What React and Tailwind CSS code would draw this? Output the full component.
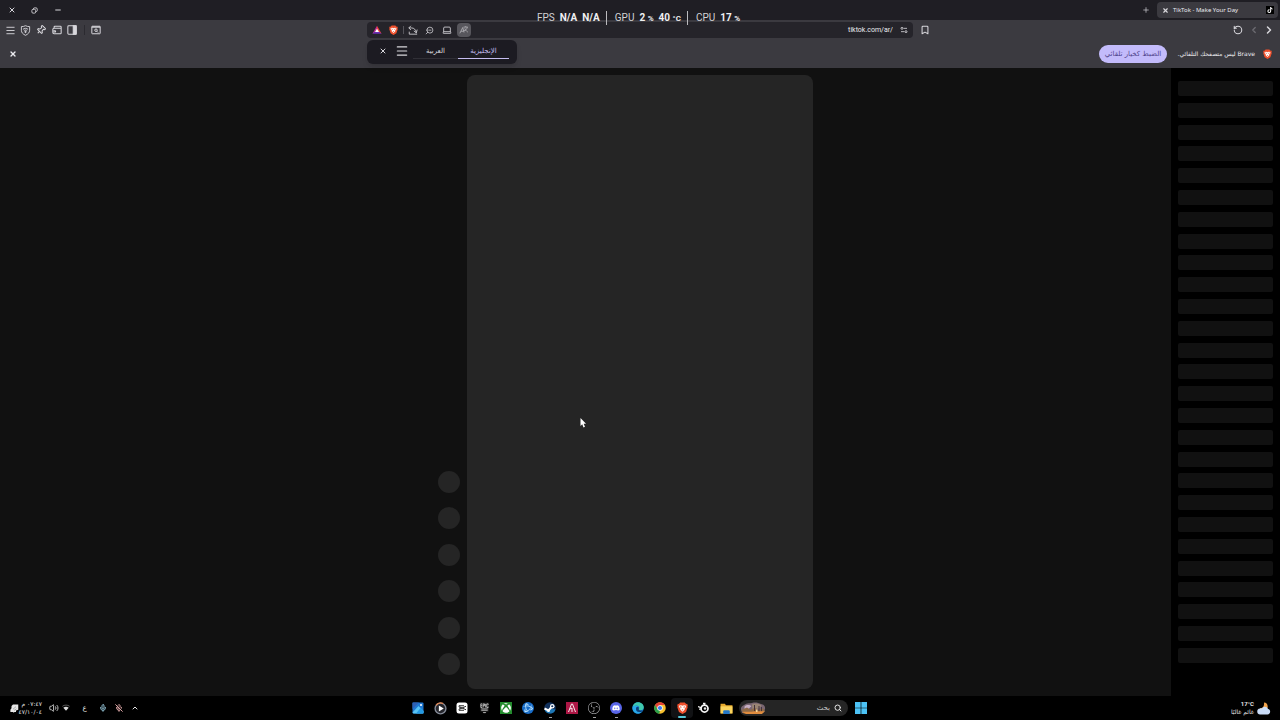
import React from "react";
import {
  X, Minus, Plus, Menu, Pin, PanelRight, Bookmark, RotateCcw, ChevronLeft, ChevronRight,
  ChevronUp, Mic, MicOff, Volume2, Search, Laptop, ZoomOut,
} from "lucide-react";
import { FaDiscord, FaXbox, FaTiktok } from "react-icons/fa";
import { SiObsstudio, SiBattledotnet } from "react-icons/si";

const arabic = "font-['DejaVu_Sans','Noto_Sans',sans-serif]";

function BraveLogo({ className }) {
  return (
    <svg viewBox="0 0 24 26" className={className} aria-hidden="true">
      <path d="M7 1h10l3 3 2-.3 1.500 3.300-.8 2.200.6 2-3.600 10.500L12 26l-7.700-4.300L.7 11.200l.6-2L.5 7 2 3.700 4 4z" fill="#f0502c" />
      <path d="M5 7.500 9 7l3 1 3-1 4 .5 1 2.500-3.500 4.500.5 2-5 4.500-5-4.500.5-2L4 10z" fill="#fff" />
      <path d="m5.500 9 4.500 1.300-1 3zM18.500 9 14 10.300l1 3zM10 17l2-1.500 2 1.500-2 1.500z" fill="#f0502c" />
    </svg>
  );
}

function Bat() {
  return (
    <svg viewBox="0 0 24 24" className="size-2.5" aria-hidden="true">
      <path d="M12 2 12 10 6 18 1 21z" fill="#c02a96" />
      <path d="M12 2 23 21 17 18 12 10z" fill="#f0403a" />
      <path d="M1 21h22l-5-4H6z" fill="#6a2fb4" />
      <path d="m12 9 5 8H7z" fill="#fff" />
    </svg>
  );
}

function Restore() {
  return (
    <svg viewBox="0 0 12 12" className="size-[7px]" fill="none" stroke="currentColor" strokeWidth="1.500" aria-hidden="true">
      <rect x="1.500" y="4" width="6.500" height="6.500" rx="2" />
      <path d="M4 3.500C4 2 5 1.500 6 1.500h2.500a2.200 2.200 0 0 1 2.200 2.200V6c0 1-.7 1.800-1.700 2" />
    </svg>
  );
}

function ShieldEye() {
  return (
    <svg viewBox="0 0 24 24" className="size-[11px]" fill="none" stroke="currentColor" strokeWidth="2" aria-hidden="true">
      <path d="M12 1.500c3 1.700 6 2 9 2v8c0 5-3.500 8.500-9 11-5.500-2.500-9-6-9-11v-8c3 0 6-.3 9-2z" />
      <path d="M6.500 9.500c3-3 8-3 11 0M8.500 12.500c2-2 5-2 7 0" />
      <circle cx="12" cy="15" r="1.500" fill="currentColor" />
    </svg>
  );
}

function Wallet() {
  return (
    <svg viewBox="0 0 24 24" className="size-[10px]" fill="none" stroke="currentColor" strokeWidth="2.500" aria-hidden="true">
      <path d="M5 8V5a2 2 0 0 1 2-2h13a2 2 0 0 1 2 2v14a2 2 0 0 1-2 2H5a3 3 0 0 1-3-3v-7a3 3 0 0 1 3-3h17" />
      <path d="M3 14h5a2 2 0 0 1 0 3H3" />
    </svg>
  );
}

function SidePanel() {
  return (
    <svg viewBox="0 0 24 24" className="size-[10px]" fill="none" stroke="currentColor" strokeWidth="2.500" aria-hidden="true">
      <rect x="2" y="2" width="20" height="20" rx="2" />
      <path d="M15 2h7v20h-7z" fill="currentColor" />
    </svg>
  );
}

function TabSearch() {
  return (
    <svg viewBox="0 0 24 24" className="size-[10px]" fill="none" stroke="currentColor" strokeWidth="2.400" aria-hidden="true">
      <rect x="2" y="3" width="20" height="18" rx="1" />
      <path d="M2 5h20" strokeWidth="3" />
      <circle cx="12" cy="12.500" r="3" />
      <path d="m14 15 3 3" />
    </svg>
  );
}

function Share() {
  return (
    <svg viewBox="0 0 24 24" className="size-[10px]" fill="none" stroke="currentColor" strokeWidth="2" aria-hidden="true">
      <path d="M7 2 2 7l5 5M2 7h6c7 0 10 4 12 11M14 14l6 5 2-8M3 16v6h19" />
    </svg>
  );
}

function Tune() {
  return (
    <svg viewBox="0 0 24 24" className="size-2" fill="none" stroke="currentColor" strokeWidth="2.500" aria-hidden="true">
      <circle cx="6" cy="7" r="3" />
      <path d="M11 7h10M3 17h10" />
      <circle cx="18" cy="17" r="3" />
    </svg>
  );
}

function Translate() {
  return (
    <svg viewBox="0 0 24 24" className="size-2.5" fill="none" stroke="currentColor" strokeWidth="2" aria-hidden="true">
      <path d="m2 20 7-14 3 12M5 15h6M11 5h10M16 3v2M20 5c-1 5-4 8-8 9M14 8c1 4 4 7 7 9" />
    </svg>
  );
}

function Photos() {
  return (
    <svg viewBox="0 0 24 24" className="size-3" aria-hidden="true">
      <rect x="1" y="1" width="22" height="22" rx="2" fill="#1f78d1" />
      <path d="M1 1h13L1 14z" fill="#2f5fb4" />
      <path d="M1 21 13 8l10 10v3a2 2 0 0 1-2 2H3z" fill="#58c4f5" />
      <path d="M8 23 17 12l6 6v5z" fill="#2499e3" />
      <circle cx="18" cy="6" r="2" fill="#fff" />
    </svg>
  );
}

function MediaPlayer() {
  return (
    <svg viewBox="0 0 24 24" className="size-[13px]" aria-hidden="true">
      <circle cx="12" cy="12" r="10" fill="#25262c" stroke="#858b98" strokeWidth="2.500" />
      <path d="M4 6a10 10 0 0 1 13-3" fill="none" stroke="#dc8352" strokeWidth="2.500" />
      <path d="M9 6.500v11l9-5.500z" fill="#fff" />
    </svg>
  );
}

function CapCut() {
  return (
    <svg viewBox="0 0 24 24" className="size-3" aria-hidden="true">
      <rect x="1" y="1" width="22" height="22" rx="5" fill="#fff" />
      <path d="M20 8.500 8 14M20 15.500 8 10M16 7.500H6v2l3 2.500-3 2.500v2h10" fill="none" stroke="#111" strokeWidth="1.800" />
    </svg>
  );
}

function EpicGames() {
  return (
    <svg viewBox="0 0 24 26" className="h-3 w-[11px]" fill="none" stroke="#d0d0d0" strokeWidth="1.800" aria-hidden="true">
      <path d="M2 1h20v19l-10 5-10-5z" fill="#161616" stroke="none" />
      <path d="M7 4H4v8h3M4 8h3M9 12V4h3v4H9M14.500 4v8M20 6V4h-3v8h3v-2M5 15h14M5 18h14M9 23h6" />
    </svg>
  );
}

function Steam() {
  return (
    <svg viewBox="0 0 24 24" className="size-3" aria-hidden="true">
      <circle cx="12" cy="12" r="11.500" fill="#12315c" />
      <path d="M1 15a11.500 11.500 0 0 0 22 0l-9-1z" fill="#1d77b5" />
      <path d="m1 13 8 4 7-8" fill="none" stroke="#fff" strokeWidth="4" />
      <circle cx="16.500" cy="8.500" r="4.500" fill="#fff" />
      <circle cx="16.500" cy="8.500" r="2.200" fill="#12315c" />
      <circle cx="9" cy="17" r="3" fill="#fff" />
    </svg>
  );
}

function RedTile() {
  return (
    <svg viewBox="0 0 24 24" className="size-3" aria-hidden="true">
      <rect width="24" height="24" fill="#ad1745" />
      <path d="m5 20 6-16h2l6 16M8 14l4-2v8" fill="none" stroke="#fff" strokeWidth="1.800" />
    </svg>
  );
}

function Edge() {
  return (
    <svg viewBox="0 0 24 24" className="size-3" aria-hidden="true">
      <circle cx="12" cy="12" r="11.500" fill="#1683d8" />
      <path d="M1 11C2 4 7 .5 12 .5c7 0 11.500 5 11.500 10 0 4-3 6-6.500 6-2 0-3.500-1-3.500-2 0-.8 1-1.300 1-3C14.500 9 12 7 9 7c-4 0-7 2-8 4z" fill="#40c8ac" />
      <path d="M1 11c2-4 9-5 12-1-3-1-5 1-5 4 0 5 5 8 11 6-5 6-18 4-18-9z" fill="#28a8e8" />
      <path d="M13 10c-3-1-5 1-5 4 0 5 5 8 12 5l2-3c-3 2-10 1-8.500-2z" fill="#0d3f77" />
    </svg>
  );
}

function Chrome() {
  return (
    <svg viewBox="0 0 24 24" className="size-3" aria-hidden="true">
      <circle cx="12" cy="12" r="11.500" fill="#f6c02d" />
      <path d="M2 6.200A11.500 11.500 0 0 1 22 6.200H12L7.500 15z" fill="#e44235" />
      <path d="M2 6.200 7.200 15 12 17.500l-1.500 6A11.500 11.500 0 0 1 2 6.200z" fill="#2ba24c" />
      <circle cx="12" cy="12" r="5.500" fill="#fff" />
      <circle cx="12" cy="12" r="4.200" fill="#3b7ded" />
    </svg>
  );
}

function SteelSeries() {
  return (
    <svg viewBox="0 0 24 24" className="size-3" fill="none" stroke="#f4f4f4" aria-hidden="true">
      <circle cx="13" cy="13" r="7" strokeWidth="3.500" />
      <circle cx="14" cy="13" r="2" fill="#f4f4f4" />
      <path d="M10 2.500h5M12.500 2v5M0 9l8 3M2 14h5" strokeWidth="2.500" />
    </svg>
  );
}

function Folder() {
  return (
    <svg viewBox="0 0 24 24" className="size-[13px]" aria-hidden="true">
      <path d="M1 3h8l2 3h12v15H1z" fill="#e6a92c" />
      <path d="M1 8h22v13H1z" fill="#fad45e" />
      <path d="M6 22v-5a2 2 0 0 1 2-2h8a2 2 0 0 1 2 2v5z" fill="#2376c7" />
    </svg>
  );
}

function Windows() {
  return (
    <svg viewBox="0 0 24 24" className="size-3" aria-hidden="true">
      <path d="M0 0h11.300v11.300H0zM12.700 0H24v11.300H12.700zM0 12.700h11.300V24H0zM12.700 12.700H24V24H12.700z" fill="#4cc2f5" />
    </svg>
  );
}

function SearchArt() {
  return (
    <svg viewBox="0 0 52 26" className="h-[13px] w-[26px] shrink-0" aria-hidden="true">
      <path d="M2 15C1 9 7 7 10 5c5-4 10-2 14-3 7-2 13 0 18 2 6 1 9 5 8 10l-3 8H4z" fill="#796672" />
      <path d="M9 9c5-5 11-3 14-1l-5 5-9 3z" fill="#c6aec3" />
      <path d="M24 5c7-4 15-1 19 2l-5 6-13 2z" fill="#998474" />
      <path d="m3 16 11-5 7 5 9-5 5 5 12-3 3 6-6 4H7z" fill="#8e6a48" />
      <path d="M29 6v13M38 8v11M43 10v9" stroke="#44333b" strokeWidth="2" />
      <path d="M4 20c9-2 13 1 22-1s15 1 23-1l-5 6H12z" fill="#e08c3e" />
      <path d="M32 15h3v5h-3z" fill="#f5d69c" />
    </svg>
  );
}

function Weather() {
  return (
    <svg viewBox="0 0 28 26" className="h-[13px] w-[14px]" aria-hidden="true">
      <path d="M14 1a8 8 0 1 1-8 11c5 1 9-3 8-11z" fill="#f0a24a" />
      <path d="M7 25a6 6 0 0 1-1-12c2-1 3 0 4 0 2-5 10-5 12 1 6 1 6 10-1 11z" fill="#c9dcf8" />
    </svg>
  );
}

function IconButton({ label, className = "", children }) {
  return (
    <button type="button" aria-label={label} className={`flex shrink-0 items-center justify-center ${className}`}>
      {children}
    </button>
  );
}

function TabStrip() {
  return (
    <header className="flex h-5 items-center bg-[#1f1e24] pr-0.5 text-[#d8d7dc]">
      <IconButton label="إغلاق" className="w-[23px]"><X className="size-2" strokeWidth={3} /></IconButton>
      <IconButton label="استعادة" className="w-[23px]"><Restore /></IconButton>
      <IconButton label="تصغير" className="w-[23px]"><Minus className="size-2" strokeWidth={3} /></IconButton>
      <div className="flex-1" />
      <IconButton label="علامة تبويب جديدة" className="w-[22px]"><Plus className="size-2" /></IconButton>
      <div className="flex h-4 w-[121px] items-center rounded bg-[#3b3a40] px-1">
        <IconButton label="إغلاق علامة التبويب" className="size-2"><X className="size-[7px]" strokeWidth={4} /></IconButton>
        <span className="ml-1 flex-1 whitespace-nowrap font-['Noto_Sans',sans-serif] text-[6px] leading-[8px] text-[#ececf0]">TikTok - Make Your Day</span>
        <span className="flex size-2 items-center justify-center bg-black"><FaTiktok className="size-1.5 text-white" /></span>
      </div>
    </header>
  );
}

function TranslatePopup() {
  return (
    <div className="absolute top-[18px] left-0 z-10 flex h-6 w-[150px] items-center rounded-md bg-[#1c1b22] pb-0.5 text-[#d8d7dc] shadow-md">
      <IconButton label="إغلاق الترجمة" className="ml-2.5 w-[11px]"><X className="size-2" strokeWidth={3} /></IconButton>
      <IconButton label="خيارات الترجمة" className="ml-[7px] w-3.5"><Menu className="size-3.5" strokeWidth={2} /></IconButton>
      <div role="tablist" className={`ml-1 flex h-4 items-end text-[7px] leading-[10px] ${arabic}`}>
        <button type="button" role="tab" aria-selected="false" dir="rtl" className="h-[13px] w-[45px] border-b border-[#302f36] pb-0.5">العربية</button>
        <button type="button" role="tab" aria-selected="true" dir="rtl" className="h-[13px] w-[51px] border-b border-[#c5bdf0] pb-0.5 text-[#c5bdf0]">الإنجليزية</button>
      </div>
    </div>
  );
}

function Toolbar() {
  return (
    <div className="grid h-5 grid-cols-[1fr_546px_1fr] items-center bg-[#3b3a40] text-[#d8d7dc]">
      <div className="flex items-center pl-[3px]">
        <IconButton label="القائمة" className="w-[15px]"><Menu className="size-[11px]" /></IconButton>
        <IconButton label="VPN" className="w-[15px]"><ShieldEye /></IconButton>
        <IconButton label="الإضافات" className="w-4"><Pin className="size-2.5 rotate-45" strokeWidth={2.500} /></IconButton>
        <IconButton label="المحفظة" className="w-[15px]"><Wallet /></IconButton>
        <IconButton label="الشريط الجانبي" className="w-[15px]"><SidePanel /></IconButton>
        <span className="mx-[5px] h-2.5 w-px bg-[#2b2a30]" />
        <IconButton label="البحث في علامات التبويب" className="w-3"><TabSearch /></IconButton>
      </div>
      <div className="relative flex h-4 items-center rounded bg-[#25242a] px-0.5">
        <IconButton label="مكافآت Brave" className="w-4"><Bat /></IconButton>
        <IconButton label="دروع Brave" className="w-4"><BraveLogo className="h-2.5 w-[9px]" /></IconButton>
        <span className="ml-0.5 h-2 w-px bg-[#55545a]" />
        <IconButton label="مشاركة" className="w-[17px]"><Share /></IconButton>
        <IconButton label="تصغير العرض" className="w-[17px]"><ZoomOut className="size-[9px] -scale-x-100" strokeWidth={2} /></IconButton>
        <IconButton label="تثبيت التطبيق" className="w-[17px]"><Laptop className="size-2.5" /></IconButton>
        <IconButton label="ترجمة" className="ml-0.5 h-3.5 w-3.5 rounded-sm bg-[#57565c] text-[#b4b3b8]"><Translate /></IconButton>
        <input aria-label="العنوان" defaultValue="tiktok.com/ar/" className="min-w-0 flex-1 bg-transparent text-right font-['Roboto',sans-serif] text-[7px] leading-[10px] text-[#ececf0] outline-none" />
        <IconButton label="معلومات الموقع" className="ml-1 w-3.5"><Tune /></IconButton>
        <TranslatePopup />
      </div>
      <div className="flex items-center pr-1 pl-1.5">
        <IconButton label="إشارة مرجعية" className="w-3"><Bookmark className="size-2.5" strokeWidth={2.500} /></IconButton>
        <div className="flex-1" />
        <IconButton label="إعادة التحميل" className="w-4"><RotateCcw className="size-2.5" strokeWidth={2.500} /></IconButton>
        <IconButton label="رجوع" className="w-[15px] text-[#6d6c72]"><ChevronLeft className="size-2.5" strokeWidth={3} /></IconButton>
        <IconButton label="للأمام" className="w-[15px]"><ChevronRight className="size-3" strokeWidth={3} /></IconButton>
      </div>
    </div>
  );
}

function DefaultBrowserBar() {
  return (
    <div className="flex h-7 items-center bg-[#3b3a40] pr-2 pl-[7px] text-[#ececf0]">
      <IconButton label="إغلاق التنبيه" className="w-3"><X className="size-2" strokeWidth={4} /></IconButton>
      <div className="flex-1" />
      <button type="button" dir="rtl" className={`h-[18px] w-[68px] rounded-full bg-[#c3bbfb] text-[7px] leading-[10px] whitespace-nowrap text-[#50458c] ${arabic}`}>الضبط كخيار تلقائي</button>
      <p dir="rtl" className={`ml-1.5 w-[82px] text-[6px] leading-[10px] whitespace-nowrap ${arabic}`}>Brave ليس متصفحك التلقائي.</p>
      <BraveLogo className="ml-2 h-2.5 w-[9px]" />
    </div>
  );
}

function PerformanceOverlay() {
  return (
    <div className="pointer-events-none absolute top-[11px] left-[537px] z-20 flex h-3.5 items-center gap-[5px] font-['Roboto',sans-serif] text-[10px] leading-[14px] whitespace-nowrap text-[#f0f0f2]">
      <span className="text-[#d2d2d5]">FPS</span>
      <b>N/A</b>
      <b>N/A</b>
      <span className="mx-px h-3.5 w-px bg-[#bbbbbe]" />
      <span className="ml-0.5 text-[#d2d2d5]">GPU</span>
      <b>2 <span className="text-[8px]">%</span></b>
      <b>40 <span className="text-[8px]">°C</span></b>
      <span className="mx-px h-3.5 w-px bg-[#bbbbbe]" />
      <span className="ml-0.5 text-[#d2d2d5]">CPU</span>
      <b>17 <span className="text-[8px]">%</span></b>
    </div>
  );
}

function Feed() {
  return (
    <main className="flex flex-1 bg-black">
      <section className="grid flex-1 grid-cols-[1fr_346px_1fr] gap-[7px] bg-[#111111] pt-[7px] pb-[7px] pl-[109px]">
        <div className="flex h-full items-end justify-end pb-3.5">
          <div className="flex h-[204px] flex-col justify-between">
            {Array.from({ length: 6 }, (_, i) => (
              <div key={i} className="size-[22px] rounded-full bg-[#252525]" />
            ))}
          </div>
        </div>
        <div className="rounded-lg bg-[#252525]" />
      </section>
      <aside className="flex w-[109px] flex-col justify-between px-[7px] pt-[13px] pb-[33px]">
        {Array.from({ length: 27 }, (_, i) => (
          <div key={i} className="h-[15px] rounded-xs bg-[#111111]" />
        ))}
      </aside>
    </main>
  );
}

const apps = [
  { name: "Photos", icon: <Photos /> },
  { name: "Media Player", icon: <MediaPlayer /> },
  { name: "CapCut", icon: <CapCut /> },
  { name: "Epic Games", icon: <EpicGames /> },
  { name: "Xbox", icon: <span className="flex size-3 items-center justify-center bg-[#238b2d]"><FaXbox className="size-2.5 text-white" /></span> },
  { name: "Battle.net", icon: <span className="flex size-3 items-center justify-center rounded-full bg-[#176bc7]"><SiBattledotnet className="size-2.5 text-[#b9e3ff]" /></span> },
  { name: "Steam", icon: <Steam />, running: true },
  { name: "Armoury", icon: <RedTile /> },
  { name: "OBS Studio", icon: <SiObsstudio className="size-3 text-[#bcbcbf]" />, running: true },
  { name: "Discord", icon: <span className="flex size-3 items-center justify-center rounded-full bg-[#5865e8]"><FaDiscord className="size-2 text-white" /></span>, running: true },
  { name: "Edge", icon: <Edge /> },
  { name: "Chrome", icon: <Chrome /> },
  { name: "Brave", icon: <BraveLogo className="h-3 w-[11px]" />, active: true },
  { name: "SteelSeries", icon: <SteelSeries /> },
  { name: "File Explorer", icon: <Folder /> },
];

function Taskbar() {
  return (
    <footer className="grid h-6 grid-cols-[1fr_auto_1fr] items-center bg-black text-[#e4e4e4]">
      <div className="flex items-center pl-2">
        <IconButton label="الإشعارات" className="w-3">
          <svg viewBox="0 0 24 24" className="size-[9px]" aria-hidden="true">
            <path d="M8 1h14v14l-6 2v4h-4l-3 3v-3H1v-6l3-4V5z" fill="#e8e8e8" />
            <path d="m8 14 8-7M11 17l6-4" stroke="#777" strokeWidth="1.500" />
          </svg>
        </IconButton>
        <div dir="rtl" className={`w-[22px] text-[6px] leading-[8px] whitespace-nowrap ${arabic}`}>
          <div>٠٧:٤٧ م</div>
          <div>٤٧/١٠/٠٤</div>
        </div>
        <IconButton label="الصوت" className="ml-1.5 w-3"><Volume2 className="size-2.5" /></IconButton>
        <IconButton label="الشبكة" className="w-[11px]">
          <svg viewBox="0 0 24 24" className="size-2" fill="none" aria-hidden="true">
            <path d="M1 7c6-5 16-5 22 0" stroke="#6a6a6a" strokeWidth="2.500" />
            <path d="M4 11c5-4 11-4 16 0l-8 9z" fill="#dcdcdc" />
          </svg>
        </IconButton>
        <button type="button" className={`ml-2 w-[11px] text-[7px] leading-[10px] ${arabic}`}>ع</button>
        <IconButton label="الميكروفون" className="ml-[7px] w-3"><Mic className="size-2 text-[#8cb9cb]" strokeWidth={3} /></IconButton>
        <IconButton label="كتم الصوت" className="ml-1 w-3"><MicOff className="size-2 text-[#d9a3a3]" strokeWidth={3} /></IconButton>
        <IconButton label="الرموز المخفية" className="ml-1 w-3"><ChevronUp className="size-2" strokeWidth={3} /></IconButton>
      </div>
      <div className="flex items-center">
        {apps.map((app) => (
          <button
            key={app.name}
            type="button"
            aria-label={app.name}
            className={`relative flex h-5 w-[22px] items-center justify-center rounded-sm ${app.active ? "bg-[#111214]" : ""}`}
          >
            {app.icon}
            {app.running && <span className="absolute bottom-0 h-px w-[3px] bg-[#a0a0a0]" />}
            {app.active && <span className="absolute bottom-0 h-0.5 w-2 rounded-full bg-[#56c7d8]" />}
          </button>
        ))}
        <label className="ml-0.5 flex h-4 w-[109px] items-center rounded-full bg-[#252525] pr-1.5 pl-px">
          <SearchArt />
          <input type="search" dir="rtl" aria-label="بحث" placeholder="بحث" className={`mr-1 min-w-0 flex-1 bg-transparent text-[7px] leading-[10px] outline-none placeholder:text-[#c8c8c8] ${arabic}`} />
          <Search className="size-2" strokeWidth={3} />
        </label>
        <IconButton label="ابدأ" className="ml-px w-6"><Windows /></IconButton>
      </div>
      <div className="flex items-center justify-end gap-[3px] pr-[9px]">
        <div dir="rtl" className={`text-[6px] leading-[8px] whitespace-nowrap ${arabic}`}>
          <div dir="ltr" className="text-right font-['Roboto',sans-serif] font-bold">17°C</div>
          <div>غائم غالبًا</div>
        </div>
        <Weather />
      </div>
    </footer>
  );
}

export default function App() {
  return (
    <div className="relative flex min-h-screen flex-col overflow-hidden bg-black">
      <TabStrip />
      <Toolbar />
      <DefaultBrowserBar />
      <Feed />
      <Taskbar />
      <PerformanceOverlay />
      <svg viewBox="0 0 12 20" className="pointer-events-none absolute top-[418px] left-[580px] h-2.5 w-1.5" aria-hidden="true">
        <path d="M1 0v16l3.500-3.500L7 19l3-1.300-2.700-6H12z" fill="#fff" />
      </svg>
    </div>
  );
}
